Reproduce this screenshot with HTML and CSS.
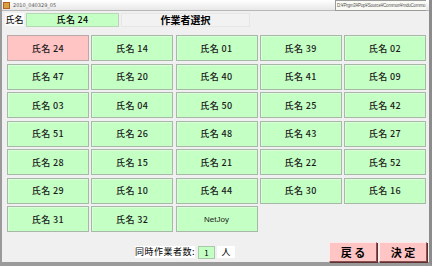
FILE: index.html
```html
<!DOCTYPE html>
<html lang="ja">
<head>
<meta charset="utf-8">
<link rel="stylesheet" href="styles.css">
</head>
<body>
<div class="window">
  <div class="titlebar">
    <span class="app-icon"></span>
    <span class="title">2010_040329_05</span>
  </div>
  <div class="tooltip">D:¥Prgm3¥Pop¥Source¥Common¥mduCommo</div>
  <div class="content">
    <div class="header">
      <span class="lbl">氏名</span>
      <span class="field">氏名 24</span>
      <span class="heading">作業者選択</span>
    </div>
    <div class="grid">
      <div class="btn sel">氏名 24</div>
      <div class="btn">氏名 14</div>
      <div class="btn">氏名 01</div>
      <div class="btn">氏名 39</div>
      <div class="btn">氏名 02</div>
      <div class="btn">氏名 47</div>
      <div class="btn">氏名 20</div>
      <div class="btn">氏名 40</div>
      <div class="btn">氏名 41</div>
      <div class="btn">氏名 09</div>
      <div class="btn">氏名 03</div>
      <div class="btn">氏名 04</div>
      <div class="btn">氏名 50</div>
      <div class="btn">氏名 25</div>
      <div class="btn">氏名 42</div>
      <div class="btn">氏名 51</div>
      <div class="btn">氏名 26</div>
      <div class="btn">氏名 48</div>
      <div class="btn">氏名 43</div>
      <div class="btn">氏名 27</div>
      <div class="btn">氏名 28</div>
      <div class="btn">氏名 15</div>
      <div class="btn">氏名 21</div>
      <div class="btn">氏名 22</div>
      <div class="btn">氏名 52</div>
      <div class="btn">氏名 29</div>
      <div class="btn">氏名 10</div>
      <div class="btn">氏名 44</div>
      <div class="btn">氏名 30</div>
      <div class="btn">氏名 16</div>
      <div class="btn">氏名 31</div>
      <div class="btn">氏名 32</div>
      <div class="btn latin">NetJoy</div>
    </div>
    <div class="footer">
      <span class="flbl">同時作業者数:</span>
      <span class="count">1</span>
      <span class="unit">人</span>
      <span class="spacer"></span>
      <div class="actions">
        <div class="act">戻 る</div>
        <div class="act">決 定</div>
      </div>
    </div>
  </div>
</div>
</body>
</html>
```

FILE: styles.css
```css
html, body {
  margin: 0;
  padding: 0;
}
body {
  width: 432px;
  height: 266px;
  overflow: hidden;
  background: #f0f0f0;
  font-family: "Noto Sans CJK JP", "DejaVu Sans", sans-serif;
  color: #000;
}
.window {
  position: relative;
  width: 432px;
  height: 266px;
  box-sizing: border-box;
  border-left: 2px solid #9a9a9a;
  border-right: 3px solid #8c8c8c;
  border-bottom: 4px solid #9a9a9a;
  background: #f0f0f0;
  display: flex;
  flex-direction: column;
}
.titlebar {
  height: 10px;
  background: linear-gradient(#ffffff, #e8e8e8);
  border-bottom: 1px solid #b8b8b8;
  display: flex;
  align-items: center;
  gap: 3px;
  padding-left: 1px;
}
.app-icon {
  width: 5px;
  height: 5px;
  background: #d8a040;
  border: 1px solid #b06020;
}
.title {
  font-family: "DejaVu Sans", sans-serif;
  font-size: 5px;
  color: #555;
}
.tooltip {
  position: absolute;
  top: 0;
  left: 333px;
  height: 9px;
  white-space: nowrap;
  background: #fafaf4;
  border: 1px solid #9a9a9a;
  border-right: none;
  font-family: "Liberation Sans", sans-serif;
  font-size: 4.5px;
  letter-spacing: -0.2px;
  line-height: 9px;
  color: #555;
  padding: 0 1px;
}
.content {
  flex: 1;
  display: flex;
  flex-direction: column;
  padding: 2px 0 0 0;
}
.header {
  display: flex;
  align-items: center;
  height: 13px;
  padding-left: 3px;
}
.lbl {
  width: 19px;
  height: 13px;
  background: #fafafa;
  font-size: 9px;
  line-height: 13px;
  text-align: center;
}
.field {
  margin-left: 2px;
  width: 91px;
  height: 12px;
  background: #c4ffc4;
  border: 1px solid #b4d8b4;
  border-right-color: #c8c8c8;
  font-size: 9px;
  font-weight: 500;
  line-height: 12px;
  text-align: center;
  letter-spacing: 0.3px;
}
.heading {
  margin-left: 2px;
  width: 127px;
  height: 12px;
  border: 1px solid #e6e6e6;
  background: #f2f2f2;
  font-size: 10px;
  font-weight: 700;
  line-height: 12px;
  text-align: center;
}
.grid {
  display: grid;
  grid-template-columns: repeat(5, 82px);
  grid-auto-rows: 26px;
  column-gap: 2.25px;
  row-gap: 2.5px;
  margin: 9px 0 0 5px;
}
.btn {
  box-sizing: border-box;
  background: #c4ffc4;
  border: 1px solid #a8b8a8;
  box-shadow: inset 1px 1px 0 #d8ffd8;
  font-size: 9px;
  font-weight: 500;
  color: #1a1a1a;
  display: flex;
  align-items: center;
  justify-content: center;
  letter-spacing: 0.4px;
}
.btn.sel {
  background: #ffc4c4;
  border-color: #b8a8a8;
  box-shadow: none;
}
.btn.latin {
  font-family: "Liberation Sans", sans-serif;
  font-weight: 400;
  font-size: 8px;
  letter-spacing: 0;
}
.footer {
  display: flex;
  align-items: center;
  margin-top: 10px;
  padding-left: 133px;
  height: 20px;
}
.flbl {
  height: 12px;
  width: 60px;
  background: #ffffff;
  font-size: 9px;
  line-height: 12px;
  text-align: center;
  letter-spacing: 0.5px;
}
.count {
  margin-left: 3px;
  width: 15px;
  height: 11px;
  background: #c4ffc4;
  border: 1px solid #a8c8a8;
  font-size: 8px;
  line-height: 11px;
  text-align: center;
}
.unit {
  margin-left: 2px;
  width: 18px;
  height: 12px;
  background: #ffffff;
  font-size: 9px;
  line-height: 12px;
  text-align: center;
}
.spacer {
  flex: 1;
}
.actions {
  display: flex;
  gap: 2px;
  margin-right: 2px;
}
.act {
  box-sizing: border-box;
  width: 48px;
  height: 20px;
  background: #ffc4c4;
  border: 1px solid #8a5050;
  border-top-color: #ffe8e8;
  border-left-color: #ffe8e8;
  box-shadow: 1px 1px 0 #603030;
  font-size: 11px;
  font-weight: 700;
  line-height: 18px;
  text-align: center;
  white-space: pre;
}
```
